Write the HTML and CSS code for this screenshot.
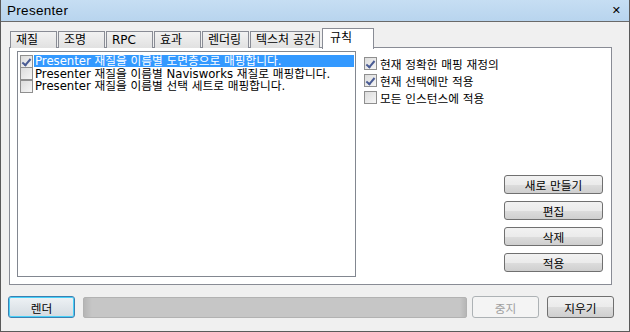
FILE: index.html
```html
<!DOCTYPE html>
<html lang="ko">
<head>
  <meta charset="UTF-8">
  <title>Presenter</title>
  <link rel="stylesheet" href="styles.css">
</head>
<body>
<div class="window">
  <div class="titlebar">
    <span class="title">Presenter</span>
    <span class="close">&#x2715;</span>
  </div>

  <div class="tabs">
    <div class="tab">재질</div>
    <div class="tab">조명</div>
    <div class="tab">RPC</div>
    <div class="tab">효과</div>
    <div class="tab">렌더링</div>
    <div class="tab wide">텍스처 공간</div>
    <div class="tab active">규칙</div>
  </div>

  <div class="panel">
    <div class="list">
      <div class="row selected"><span class="check on"></span><span class="label">Presenter 재질을 이름별 도면층으로 매핑합니다.</span></div>
      <div class="row"><span class="check"></span><span class="label">Presenter 재질을 이름별 Navisworks 재질로 매핑합니다.</span></div>
      <div class="row"><span class="check"></span><span class="label">Presenter 재질을 이름별 선택 세트로 매핑합니다.</span></div>
    </div>
    <div class="side">
      <div class="options">
        <label class="opt"><span class="check on"></span>현재 정확한 매핑 재정의</label>
        <label class="opt"><span class="check on"></span>현재 선택에만 적용</label>
        <label class="opt"><span class="check"></span>모든 인스턴스에 적용</label>
      </div>
      <div class="actions">
        <button class="btn side-btn">새로 만들기</button>
        <button class="btn side-btn">편집</button>
        <button class="btn side-btn">삭제</button>
        <button class="btn side-btn">적용</button>
      </div>
    </div>
  </div>

  <div class="bottom">
    <button class="btn focus">렌더</button>
    <div class="progress"></div>
    <button class="btn" disabled>중지</button>
    <button class="btn">지우기</button>
  </div>
</div>
</body>
</html>
```

FILE: styles.css
```css
body {
  margin: 0;
  font-family: "DejaVu Sans", "Noto Sans CJK KR", sans-serif;
  font-size: 12px;
  color: #000;
}

.window {
  width: 630px;
  height: 332px;
  box-sizing: border-box;
  border: 1px solid #5a5a5a;
  border-top: none;
  background: #f0f0f0;
  display: flex;
  flex-direction: column;
}

.titlebar {
  height: 22px;
  box-sizing: border-box;
  border-bottom: 1px solid #6a6a6a;
  background: linear-gradient(#c6def3, #b8d4ee);
  display: flex;
  align-items: center;
  justify-content: space-between;
  padding: 0 8px 0 6px;
}

.title {
  font-family: "Liberation Sans", sans-serif;
  font-size: 13.5px;
  letter-spacing: 0.3px;
}

.close {
  font-size: 11px;
  font-weight: bold;
}

.tabs {
  display: flex;
  align-items: flex-end;
  gap: 1px;
  padding-left: 9px;
  margin-top: 6px;
  height: 20px;
  position: relative;
  z-index: 1;
}

.tab {
  width: 47px;
  height: 17px;
  box-sizing: border-box;
  border: 1px solid #898c95;
  border-bottom: none;
  background: linear-gradient(#f2f2f2, #e1e1e1);
  padding-left: 5px;
  line-height: 16px;
}

.tab.wide {
  width: 70px;
}

.tab.active {
  width: 52px;
  height: 21px;
  margin-left: 1px;
  background: #fff;
  padding-left: 7px;
  line-height: 18px;
  margin-bottom: -1px;
}

.panel {
  margin: -1px 17px 0 8px;
  height: 238px;
  box-sizing: border-box;
  border: 1px solid #898c95;
  background: #fff;
  padding: 3px 7px 7px 7px;
  display: flex;
  gap: 8px;
}

.list {
  width: 339px;
  box-sizing: border-box;
  border: 1px solid #828790;
  padding: 3px 1px 0 2px;
}

.row {
  display: flex;
  align-items: center;
  height: 12px;
  gap: 1px;
  margin-bottom: 0.5px;
}

.label {
  flex: 1;
  height: 12px;
  line-height: 12px;
  padding-left: 1px;
  white-space: nowrap;
  font-size: 11.7px;
}

.row.selected .label {
  background: #3399ff;
  color: #fff;
}

.check {
  width: 13px;
  height: 13px;
  box-sizing: border-box;
  border: 1px solid #8f8f8f;
  background: linear-gradient(135deg, #dcdcdc, #f6f6f6);
  position: relative;
  flex: none;
}

.check.on::after {
  content: "";
  position: absolute;
  left: 3px;
  top: 1px;
  width: 3px;
  height: 7px;
  border: solid #4a5c94;
  border-width: 0 2px 2px 0;
  transform: rotate(40deg);
}

.side {
  flex: 1;
  display: flex;
  flex-direction: column;
  padding-top: 5px;
}

.options {
  display: flex;
  flex-direction: column;
  gap: 3px;
}

.opt {
  display: flex;
  align-items: center;
  gap: 3px;
  height: 14px;
  font-size: 11.7px;
}

.actions {
  margin-top: auto;
  align-self: flex-end;
  margin-right: 1px;
  display: flex;
  flex-direction: column;
  gap: 7px;
  margin-bottom: 5px;
}

.btn {
  font-family: "DejaVu Sans", "Noto Sans CJK KR", sans-serif;
  font-size: 11.7px;
  color: #000;
  border: 1px solid #707070;
  border-radius: 3px;
  background: linear-gradient(#f2f2f2 0%, #ebebeb 50%, #dddddd 51%, #cfcfcf 100%);
  padding: 0;
}

.side-btn {
  width: 99px;
  height: 19px;
}

.bottom {
  display: flex;
  align-items: center;
  padding: 11px 0 0 7px;
  gap: 8px;
}

.bottom .btn {
  width: 67px;
  height: 22px;
}

.btn.focus {
  border-color: #3c7fb1;
  box-shadow: inset 0 0 0 1px #48d0f8;
  background: linear-gradient(#eef2f5, #d4dbe1);
}

.btn[disabled] {
  border-color: #adb2b5;
  background: #f4f4f4;
  color: #a0a0a0;
  margin-left: -3px;
}

.progress {
  width: 384px;
  height: 21px;
  box-sizing: border-box;
  border: 1px solid #b2b2b2;
  border-radius: 2px;
  background: linear-gradient(90deg, #b6b6b6 0px, #c6c6c6 8px, #c6c6c6 376px, #b6b6b6 100%);
}
```
